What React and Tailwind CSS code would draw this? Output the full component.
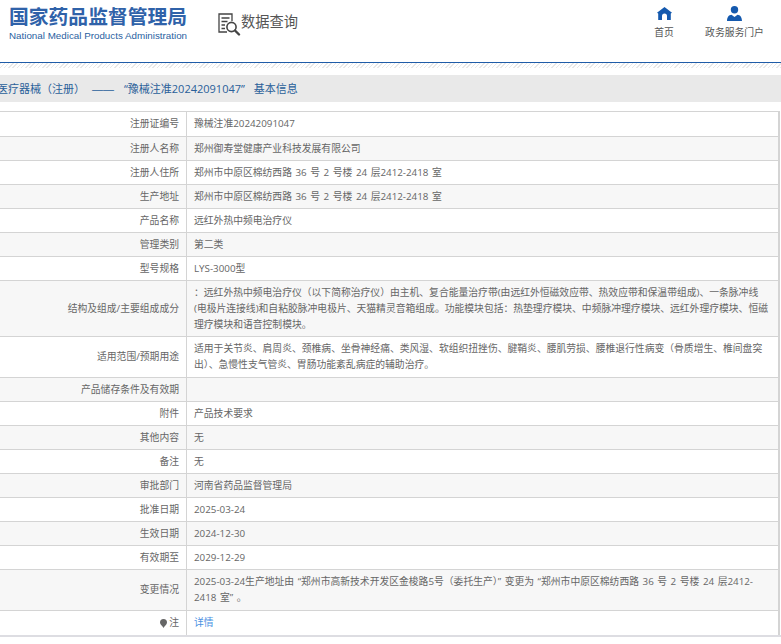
import React from "react";

const rows = [
  { label: "注册证编号", value: "豫械注准20242091047", height: "min-h-[25px]" },
  { label: "注册人名称", value: "郑州御寿堂健康产业科技发展有限公司" },
  { label: "注册人住所", value: "郑州市中原区棉纺西路 36 号 2 号楼 24 层2412-2418 室" },
  { label: "生产地址", value: "郑州市中原区棉纺西路 36 号 2 号楼 24 层2412-2418 室" },
  { label: "产品名称", value: "远红外热中频电治疗仪" },
  { label: "管理类别", value: "第二类" },
  { label: "型号规格", value: "LYS-3000型" },
  {
    label: "结构及组成/主要组成成分",
    value:
      "：远红外热中频电治疗仪（以下简称治疗仪）由主机、复合能量治疗带(由远红外恒磁效应带、热效应带和保温带组成)、一条脉冲线(电极片连接线)和自粘胶脉冲电极片、天猫精灵音箱组成。功能模块包括：热垫理疗模块、中频脉冲理疗模块、远红外理疗模块、恒磁理疗模块和语音控制模块。",
  },
  {
    label: "适用范围/预期用途",
    value:
      "适用于关节炎、肩周炎、颈椎病、坐骨神经痛、类风湿、软组织扭挫伤、腱鞘炎、腰肌劳损、腰椎退行性病变（骨质增生、椎间盘突出）、急慢性支气管炎、胃肠功能紊乱病症的辅助治疗。",
    height: "min-h-[41px]",
  },
  { label: "产品储存条件及有效期", value: "" },
  { label: "附件", value: "产品技术要求" },
  { label: "其他内容", value: "无" },
  { label: "备注", value: "无" },
  { label: "审批部门", value: "河南省药品监督管理局" },
  { label: "批准日期", value: "2025-03-24" },
  { label: "生效日期", value: "2024-12-30" },
  { label: "有效期至", value: "2029-12-29" },
  {
    label: "变更情况",
    value:
      "2025-03-24生产地址由 “郑州市高新技术开发区金梭路5号（委托生产）” 变更为 “郑州市中原区棉纺西路 36 号 2 号楼 24 层2412-2418 室” 。",
    height: "min-h-[41px]",
  },
];

function SearchDocIcon() {
  return (
    <svg width="24" height="23" viewBox="0 0 24 23" fill="none" stroke="#444" strokeWidth="1.3">
      <path d="M9 19H1V1h13v7" />
      <path d="M3.500 5h8M3.500 8.500h6M3.500 12h3.500M3.500 15.500h3.500" />
      <circle cx="13.500" cy="14" r="4.600" strokeWidth="1.600" />
      <path d="M17 17.500l4 4" strokeWidth="2.400" strokeLinecap="round" />
    </svg>
  );
}

function HomeIcon() {
  return (
    <svg width="15" height="13" viewBox="0 0 15 13" fill="#1459ae">
      <path d="M7.500 0L15 5.800 13.800 6.600V13H10V9a2.500 2.500 0 0 0-5 0v4H1.200V6.600L0 5.800z" />
    </svg>
  );
}

function UserIcon() {
  return (
    <svg width="15" height="15" viewBox="0 0 15 15" fill="#1459ae">
      <circle cx="7.500" cy="3.800" r="3.700" />
      <path d="M0 15c0-4 1.800-6 4.500-6.300L7.500 11l3-2.300C13.200 9 15 11 15 15z" />
    </svg>
  );
}

function PinIcon() {
  return (
    <svg width="7" height="9" viewBox="0 0 7 9" fill="#666" className="mr-[2px]">
      <path d="M3.500 0a3.500 3.500 0 0 1 3.500 3.500C7 5.500 4.500 7 3.500 9 2.500 7 0 5.500 0 3.500A3.500 3.500 0 0 1 3.500 0z" />
    </svg>
  );
}

export default function App() {
  return (
    <div className="w-[781px] h-[644px] overflow-hidden bg-white font-['Open_Sans','Noto_Sans_CJK_SC',sans-serif]">
      {/* Header */}
      <header className="flex h-[63px] border-b border-[#1f5ca8]">
        <div className="w-[209px] pl-[9px] pt-[5px]">
          <div className="text-[19.800px] leading-[24px] font-bold text-[#2f62a9] whitespace-nowrap">国家药品监督管理局</div>
          <div className="text-[9.800px] leading-[14px] font-['Liberation_Sans',sans-serif] text-[#2a5f9f] whitespace-nowrap">National Medical Products Administration</div>
        </div>
        <div className="flex items-start pt-[13px] pl-[9px]">
          <SearchDocIcon />
          <span className="text-[14.250px] leading-[18px] text-[#555] -ml-[1px]">数据查询</span>
        </div>
        <div className="ml-auto flex pr-[17px] pt-[7px]">
          <div className="flex flex-col items-center w-[20px] mr-[31px]">
            <HomeIcon />
            <span className="text-[9.800px] leading-[14px] mt-[6px] text-[#555] whitespace-nowrap">首页</span>
          </div>
          <div className="flex flex-col items-center w-[59px] -mt-[1px]">
            <UserIcon />
            <span className="text-[9.800px] leading-[14px] mt-[5px] text-[#555] whitespace-nowrap">政务服务门户</span>
          </div>
        </div>
      </header>
      <div className="h-[5px] bg-[repeating-linear-gradient(135deg,#e8e8e8_0px,#e8e8e8_1px,#fff_1px,#fff_3px)]" />

      {/* Breadcrumb */}
      <div className="mt-[7px] h-[27px] bg-[#e9e9e9] overflow-hidden text-[11px] leading-[28px] text-[#2a6099] whitespace-nowrap">
        <div className="-ml-[3px] flex">
          <span>医疗器械（注册）</span>
          <span className="ml-[7px] font-['Liberation_Sans',sans-serif]">——</span>
          <span className="ml-[10px]">“豫械注准20242091047”</span>
          <span className="ml-[9px]">基本信息</span>
        </div>
      </div>

      {/* Detail table */}
      <div className="mt-[9px] w-[780px] border-t border-r-2 border-[#d4d4d4] text-[9.800px] leading-[16px] text-[#666] [word-spacing:1px]">
        {rows.map((row, index) => (
          <div
            key={row.label}
            className={`flex border-b border-[#d4d4d4] ${row.height || "min-h-[24px]"} ${index % 2 === 1 ? "bg-[#f7f7f7]" : "bg-white"}`}
          >
            <div className="w-[187px] shrink-0 flex items-center justify-end pr-[7px] border-r border-[#d4d4d4]">
              {row.label}
            </div>
            <div className="flex-1 pl-[7px] pr-[8px] py-[3.500px]">{row.value}</div>
          </div>
        ))}
        <div className="flex min-h-[24px] bg-white">
          <div className="w-[187px] shrink-0 flex items-center justify-end pr-[7px] border-r border-[#d4d4d4]">
            <PinIcon />注
          </div>
          <div className="flex-1 px-[7px] py-[3.500px] text-[#4a90e2]">详情</div>
        </div>
      </div>
      <div className="h-[2px] bg-[#dddde2] w-[781px]" />
    </div>
  );
}
